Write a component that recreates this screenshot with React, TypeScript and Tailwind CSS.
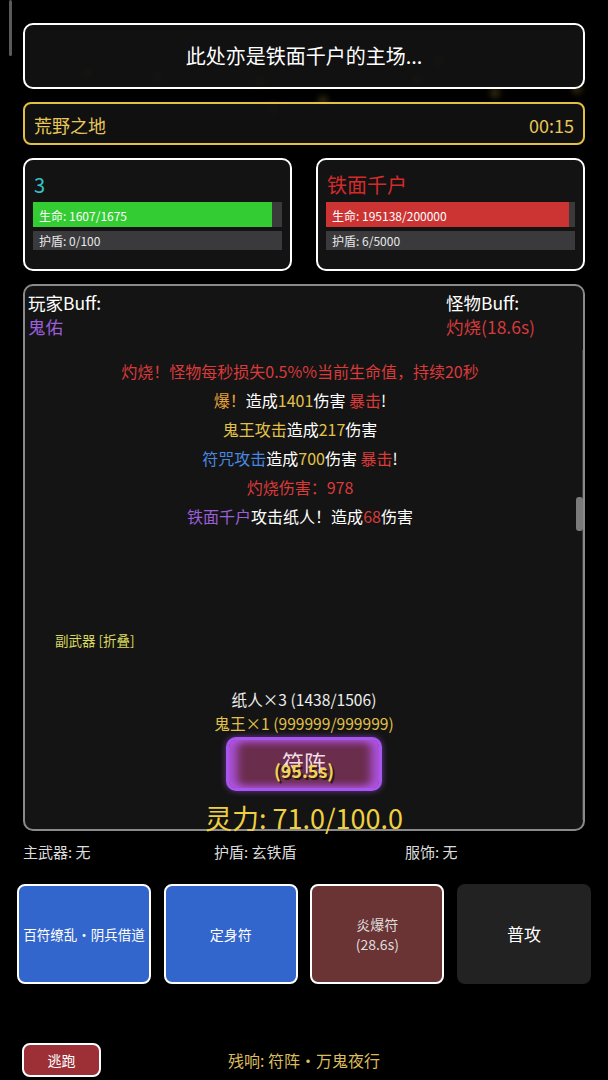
const FONT = '"Noto Sans CJK SC", "Noto Sans", sans-serif'

const particles = [
  { x: 82, y: 68 }, { x: 152, y: 72 }, { x: 255, y: 76 }, { x: 268, y: 104 },
  { x: 318, y: 96 }, { x: 412, y: 74 }, { x: 434, y: 56 }, { x: 490, y: 88 }, { x: 572, y: 84 },
]

function StatCard({
  name,
  nameClass,
  hp,
  hpMax,
  hpColor,
  shield,
  shieldMax,
}: {
  name: string
  nameClass: string
  hp: number
  hpMax: number
  hpColor: string
  shield: number
  shieldMax: number
}) {
  return (
    <div className="flex-1 h-[113px] rounded-[10px] border-2 border-white bg-[#131313] px-[8px] pt-[11px]">
      <div className={`text-[20px] leading-[28px] ml-[1px] ${nameClass}`}>{name}</div>
      <div className="relative h-[25px] bg-[#3a3a3a] mt-[3px]">
        <div className={`absolute inset-y-0 left-0 ${hpColor}`} style={{ width: `${(hp / hpMax) * 100}%` }} />
        <span className="relative pl-[6px] text-[12px] leading-[25px] text-white">
          生命: {hp}/{hpMax}
        </span>
      </div>
      <div className="h-[19px] bg-[#3a393c] mt-[4px] pl-[6px] text-[12px] leading-[20px] text-[#e8e8e8]">
        护盾: {shield}/{shieldMax}
      </div>
    </div>
  )
}

function SkillButton({ children, className }: { children: React.ReactNode; className: string }) {
  return (
    <div className={`w-[134px] h-[100px] rounded-[8px] flex flex-col items-center justify-center text-center ${className}`}>
      {children}
    </div>
  )
}

export default function App() {
  return (
    <div className="relative w-[608px] h-[1080px] bg-black overflow-hidden text-white" style={{ fontFamily: FONT }}>
      {/* background sparks */}
      {particles.map((p, i) => (
        <div
          key={i}
          className="absolute w-[10px] h-[10px] rounded-full bg-[#c9a93a] opacity-25 blur-[3px]"
          style={{ left: p.x, top: p.y }}
        />
      ))}
      {/* page scrollbar */}
      <div className="absolute left-[9px] top-0 w-[3px] h-[56px] rounded-full bg-[#5a5a5a]" />

      <div className="relative flex flex-col pt-[23px]">
        <div className="mx-[23px] h-[66px] rounded-[10px] border-2 border-white bg-[#131313]/90 flex items-center justify-center text-[20px]">
          此处亦是铁面千户的主场...
        </div>

        <div className="mx-[23px] mt-[13px] h-[43px] rounded-[8px] border-2 border-[#e2bf45] bg-[#121212]/90 flex items-center justify-between pl-[9px] pr-[9px] pt-[4px] text-[18px] text-[#e7c65a]">
          <span>荒野之地</span>
          <span>00:15</span>
        </div>

        <div className="mx-[23px] mt-[13px] flex gap-[24px]">
          <StatCard name="3" nameClass="text-[#35c3c8]" hp={1607} hpMax={1675} hpColor="bg-[#33cc33]" shield={0} shieldMax={100} />
          <StatCard name="铁面千户" nameClass="text-[#d42a2a]" hp={195138} hpMax={200000} hpColor="bg-[#cc3434]" shield={6} shieldMax={5000} />
        </div>

        {/* battle panel */}
        <div className="relative mx-[23px] mt-[13px] h-[547px] rounded-[10px] border-2 border-[#8a8a8a] bg-[#141414] flex flex-col">
          <div className="absolute right-[0px] top-[64px] w-[1px] h-[470px] bg-[#3a3a3a]" />
          <div className="absolute right-[0px] top-[211px] w-[7px] h-[34px] rounded-[3px] bg-[#7a7a7a]" />

          <div className="flex justify-between pt-[6px] pl-[3px]">
            <div>
              <div className="text-[17.5px] leading-[22px]">玩家Buff:</div>
              <div className="text-[17.5px] leading-[26px] text-[#9b5fd8]">鬼佑</div>
            </div>
            <div className="w-[137px]">
              <div className="text-[17.5px] leading-[22px]">怪物Buff:</div>
              <div className="text-[17.5px] leading-[26px] text-[#d63a3a]">灼烧(18.6s)</div>
            </div>
          </div>

          <div className="mt-[17px] flex flex-col items-center text-[16px] leading-[29px] pr-[8px]">
            <div className="text-[#d93a3a]">灼烧！怪物每秒损失0.5%%当前生命值，持续20秒</div>
            <div>
              <span className="text-[#e6a23c]">爆！</span>造成<span className="text-[#e2c24a]">1401</span>伤害 <span className="text-[#d93a3a]">暴击</span>!
            </div>
            <div>
              <span className="text-[#e2c24a]">鬼王攻击</span>造成<span className="text-[#e2c24a]">217</span>伤害
            </div>
            <div>
              <span className="text-[#4a86e0]">符咒攻击</span>造成<span className="text-[#e2c24a]">700</span>伤害 <span className="text-[#d93a3a]">暴击</span>!
            </div>
            <div className="text-[#d93a3a]">灼烧伤害：978</div>
            <div>
              <span className="text-[#9b5fd8]">铁面千户</span>攻击纸人！造成<span className="text-[#d93a3a]">68</span>伤害
            </div>
          </div>

          <div className="mt-[101px] pl-[30px] text-[13.5px] leading-[16px] text-[#d8d85c]">副武器 [折叠]</div>

          <div className="mt-[39px] flex flex-col items-center text-[15.6px] leading-[24px]">
            <div className="text-[#eeeeee]">纸人×3 (1438/1506)</div>
            <div className="text-[#e2c24a]">鬼王×1 (999999/999999)</div>
            <div className="relative mt-[2px] w-[156px] h-[54px] rounded-[10px] border-[3px] border-[#a956f0] bg-[#6a2d4c] shadow-[inset_8px_0_10px_rgba(190,90,255,0.8),inset_-8px_0_10px_rgba(190,90,255,0.8),0_0_6px_rgba(168,85,247,0.6)] flex items-center justify-center">
              <span className="absolute top-[7px] text-[22px] leading-[28px] text-[#f1dde8]">符阵</span>
              <span className="absolute top-[18px] text-[18px] leading-[24px] font-bold text-[#f2d35a] [text-shadow:2px_2px_0_#2a1a10]">
                (95.5s)
              </span>
            </div>
            <div className="mt-[11px] text-[27px] leading-[32px] text-[#efd040]">灵力: 71.0/100.0</div>
          </div>
        </div>

        <div className="mt-[11px] px-[23px] flex text-[15px] leading-[20px] text-[#dddddd]">
          <span className="w-[191px]">主武器: 无</span>
          <span className="w-[191px]">护盾: 玄铁盾</span>
          <span>服饰: 无</span>
        </div>

        <div className="mt-[22px] px-[17px] flex justify-between">
          <SkillButton className="bg-[#3366cc] border-2 border-white">
            <span className="text-[13.5px] whitespace-nowrap">百符缭乱・阴兵借道</span>
          </SkillButton>
          <SkillButton className="bg-[#3366cc] border-2 border-white">
            <span className="text-[14px]">定身符</span>
          </SkillButton>
          <SkillButton className="bg-[#6b3434] border-2 border-white text-[#dddddd]">
            <span className="text-[14px] leading-[20px]">炎爆符</span>
            <span className="text-[14px] leading-[20px]">(28.6s)</span>
          </SkillButton>
          <SkillButton className="bg-[#222222]">
            <span className="text-[17px]">普攻</span>
          </SkillButton>
        </div>

        <div className="mt-[59px] px-[22px] flex items-center">
          <div className="w-[79px] h-[34px] rounded-[8px] border-2 border-white bg-[#9d2f37] flex items-center justify-center text-[14px]">
            逃跑
          </div>
          <div className="ml-[127px] text-[16px] text-[#dcbc5c]">残响: 符阵・万鬼夜行</div>
        </div>
      </div>
    </div>
  )
}
